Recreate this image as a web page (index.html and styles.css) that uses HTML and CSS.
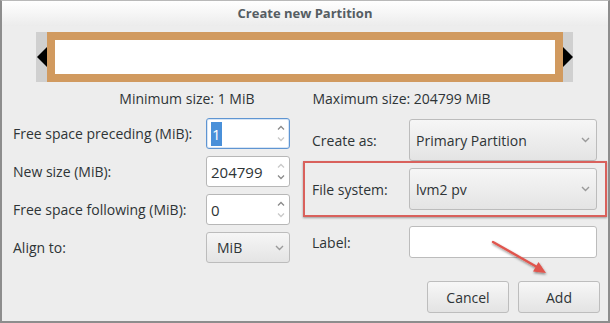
FILE: index.html
```html
<!DOCTYPE html>
<html>
<head>
<meta charset="utf-8">
<link rel="stylesheet" href="styles.css">
</head>
<body>
<div class="window">
  <div class="titlebar">Create new Partition</div>
  <div class="bar">
    <span class="tri tri-left"></span>
    <div class="part"><div class="part-inner"></div></div>
    <span class="tri tri-right"></span>
  </div>
  <div class="sizes">
    <span>Minimum size: 1 MiB</span>
    <span>Maximum size: 204799 MiB</span>
  </div>
  <div class="form">
    <div class="col-left">
      <div class="row">
        <span class="label">Free space preceding (MiB):</span>
        <div class="spin focus">
          <span class="spin-text"><span class="sel">1</span></span>
          <span class="arrows">
            <svg class="up on" width="8" height="5" viewBox="0 0 8 5"><path d="M1 4.5 L4 1.5 L7 4.5" fill="none" stroke="currentColor" stroke-width="1.3"/></svg>
            <svg class="down" width="8" height="5" viewBox="0 0 8 5"><path d="M1 0.5 L4 3.5 L7 0.5" fill="none" stroke="currentColor" stroke-width="1.3"/></svg>
          </span>
        </div>
      </div>
      <div class="row">
        <span class="label">New size (MiB):</span>
        <div class="spin">
          <span class="spin-text">204799</span>
          <span class="arrows">
            <svg class="up" width="8" height="5" viewBox="0 0 8 5"><path d="M1 4.5 L4 1.5 L7 4.5" fill="none" stroke="currentColor" stroke-width="1.3"/></svg>
            <svg class="down on" width="8" height="5" viewBox="0 0 8 5"><path d="M1 0.5 L4 3.5 L7 0.5" fill="none" stroke="currentColor" stroke-width="1.3"/></svg>
          </span>
        </div>
      </div>
      <div class="row">
        <span class="label">Free space following (MiB):</span>
        <div class="spin">
          <span class="spin-text">0</span>
          <span class="arrows">
            <svg class="up on" width="8" height="5" viewBox="0 0 8 5"><path d="M1 4.5 L4 1.5 L7 4.5" fill="none" stroke="currentColor" stroke-width="1.3"/></svg>
            <svg class="down" width="8" height="5" viewBox="0 0 8 5"><path d="M1 0.5 L4 3.5 L7 0.5" fill="none" stroke="currentColor" stroke-width="1.3"/></svg>
          </span>
        </div>
      </div>
      <div class="row">
        <span class="label">Align to:</span>
        <div class="combo small">
          <span>MiB</span>
          <svg class="chev" width="9" height="6" viewBox="0 0 9 6"><path d="M1 1 L4.5 4.5 L8 1" fill="none" stroke="currentColor" stroke-width="1.4"/></svg>
        </div>
      </div>
    </div>
    <div class="col-right">
      <div class="rrow">
        <span class="rlabel">Create as:</span>
        <div class="combo big">
          <span>Primary Partition</span>
          <svg class="chev" width="9" height="6" viewBox="0 0 9 6"><path d="M1 1 L4.5 4.5 L8 1" fill="none" stroke="currentColor" stroke-width="1.4"/></svg>
        </div>
      </div>
      <div class="rrow hl">
        <span class="rlabel">File system:</span>
        <div class="combo big">
          <span>lvm2 pv</span>
          <svg class="chev" width="9" height="6" viewBox="0 0 9 6"><path d="M1 1 L4.5 4.5 L8 1" fill="none" stroke="currentColor" stroke-width="1.4"/></svg>
        </div>
      </div>
      <div class="rrow lbl">
        <span class="rlabel">Label:</span>
        <div class="entry"></div>
      </div>
    </div>
  </div>
  <div class="buttons">
    <div class="btn">Cancel</div>
    <div class="btn">Add</div>
  </div>
  <svg class="annot" width="610" height="323" viewBox="0 0 610 323">
    <defs>
      <filter id="sh" x="-20%" y="-20%" width="140%" height="140%">
        <feDropShadow dx="0.5" dy="1.5" stdDeviation="1" flood-color="#000" flood-opacity="0.45"/>
      </filter>
    </defs>
    <g filter="url(#sh)">
      <line x1="493" y1="242" x2="537" y2="267" stroke="#e0554d" stroke-width="2.4" stroke-linecap="round"/>
      <path d="M546 273 L533 271.5 L538.5 262 Z" fill="#e0554d"/>
    </g>
  </svg>
</div>
</body>
</html>
```
FILE: styles.css
```css
html, body {
  margin: 0;
  padding: 0;
  background: #ededed;
}
body {
  font-family: "Open Sans", "DejaVu Sans", sans-serif;
  font-size: 14px;
  color: #2e3436;
}
.window {
  position: relative;
  box-sizing: border-box;
  width: 610px;
  height: 323px;
  background: #ededed;
  border: 2px solid #8d8d8d;
  border-top: 1px solid #b9b9b9;
  display: flex;
  flex-direction: column;
  overflow: hidden;
}
.titlebar {
  height: 25px;
  line-height: 24px;
  text-align: center;
  font-weight: bold;
  font-size: 13px;
  color: #555d63;
  background: linear-gradient(#ffffff, #ececec);
}
.bar {
  align-self: center;
  margin-top: 6px;
  margin-left: -2px;
  width: 537px;
  height: 50px;
  background: #d0d0d0;
  display: flex;
  align-items: center;
}
.part {
  flex: 1;
  height: 100%;
  box-sizing: border-box;
  border: 8px solid #d19a5f;
  background: #fff;
}
.tri {
  width: 0;
  height: 0;
  border-top: 10px solid transparent;
  border-bottom: 10px solid transparent;
}
.tri-left {
  border-right: 10px solid #000;
  margin-left: 1px;
}
.tri-right {
  border-left: 10px solid #000;
}
.sizes {
  display: flex;
  justify-content: center;
  gap: 58px;
  margin-top: 8px;
  height: 18px;
  line-height: 18px;
  color: #2e3436;
}
.form {
  display: flex;
  margin-top: 10px;
}
.col-left {
  width: 290px;
  padding-left: 11px;
  display: flex;
  flex-direction: column;
  gap: 7px;
}
.row {
  display: flex;
  align-items: center;
  height: 31px;
}
.label {
  width: 193px;
}
.spin {
  box-sizing: border-box;
  width: 84px;
  height: 31px;
  border: 1px solid #b7b7b7;
  border-radius: 3px;
  background: #fff;
  display: flex;
  align-items: center;
}
.spin.focus {
  border-color: #5f95d2;
  box-shadow: inset 0 0 0 1px #d7e5f5;
}
.spin-text {
  flex: 1;
  padding-left: 4px;
  font-size: 15px;
  color: #2e3436;
}
.sel {
  background: #4a90d9;
  color: #fff;
  padding: 2px 1px;
}
.arrows {
  width: 16px;
  display: flex;
  flex-direction: column;
  align-items: center;
  gap: 7px;
  color: #c9c9c9;
}
.arrows .on {
  color: #8a8a8a;
}
.combo {
  box-sizing: border-box;
  border: 1px solid #bcbcbc;
  border-radius: 3px;
  background: linear-gradient(#f6f6f6, #e4e4e4);
  display: flex;
  align-items: center;
  justify-content: space-between;
  color: #2e3436;
}
.combo.small {
  width: 84px;
  height: 31px;
  padding-left: 10px;
  padding-right: 5px;
}
.combo.big {
  width: 188px;
  height: 42px;
  padding-left: 6px;
  padding-right: 6px;
}
.chev {
  color: #9a9a9a;
}
.col-right {
  width: 304px;
  margin-top: 1px;
  display: flex;
  flex-direction: column;
}
.rrow {
  display: flex;
  align-items: center;
  padding-left: 9px;
  height: 42px;
}
.rlabel {
  width: 97px;
}
.rrow.hl {
  box-sizing: border-box;
  height: 56px;
  padding-left: 7px;
  border: 2px solid #d9615c;
  box-shadow: 0 1px 2px rgba(0,0,0,0.35);
}
.rrow.lbl {
  margin-top: 9px;
  height: 32px;
}
.entry {
  box-sizing: border-box;
  width: 188px;
  height: 32px;
  background: #fff;
  border: 1px solid #bcbcbc;
  border-radius: 3px;
}
.buttons {
  display: flex;
  justify-content: flex-end;
  gap: 9px;
  margin-top: 18px;
  padding-right: 8px;
}
.btn {
  box-sizing: border-box;
  width: 82px;
  height: 32px;
  border: 1px solid #bdbdbd;
  border-radius: 3px;
  background: linear-gradient(#f7f7f7, #e3e3e3);
  display: flex;
  align-items: center;
  justify-content: center;
  color: #2e3436;
}
.annot {
  position: absolute;
  left: -2px;
  top: -1px;
  pointer-events: none;
}
```
